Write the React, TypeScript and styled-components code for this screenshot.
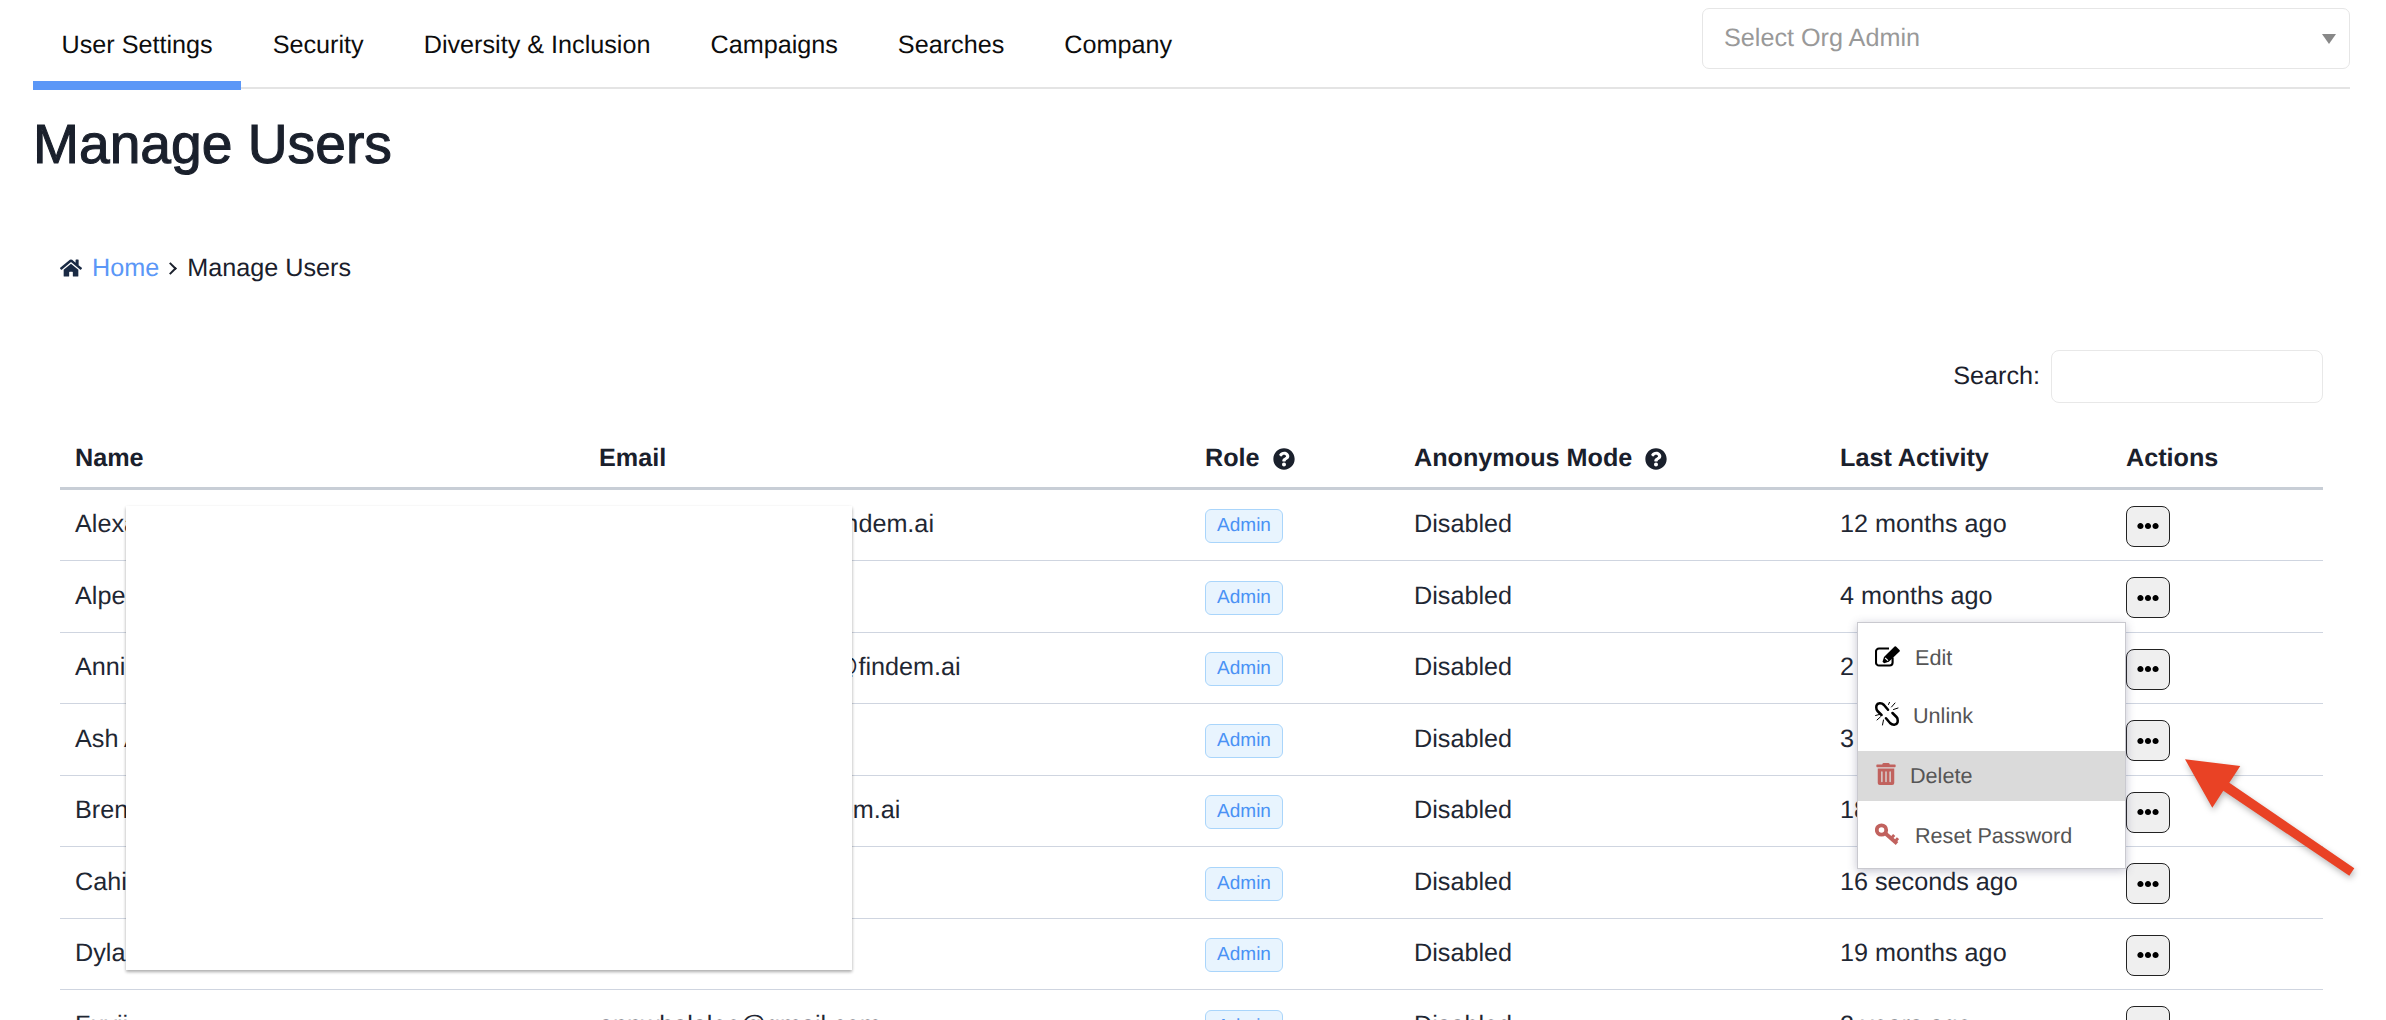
import React from "react";
import styled, { createGlobalStyle } from "styled-components";
import { FaHome, FaQuestionCircle, FaTrashAlt, FaEllipsisH } from "react-icons/fa";

const Global = createGlobalStyle`
  html, body { margin: 0; padding: 0; background: #fff; overflow: hidden; }
  * { box-sizing: border-box; }
  body {
    font-family: "Liberation Sans", Arial, sans-serif;
    font-size: 25.2px;
    color: #1a202c;
    text-rendering: geometricPrecision;
  }
`;

const Page = styled.div`
  position: relative;
  width: 2386px;
  height: 1020px;
  overflow: hidden;
  padding: 0 36px 0 33px;
`;

const Nav = styled.nav`
  display: flex;
  justify-content: space-between;
  align-items: flex-start;
  height: 89px;
  border-bottom: 2px solid #e4e4e4;
`;

const Tabs = styled.div`
  display: flex;
  gap: 3px;
`;

const Tab = styled.a<{ $active?: boolean }>`
  display: block;
  height: 90px;
  padding: 30px 28.5px 0 28.5px;
  line-height: 30px;
  color: #0d0d0d;
  border-bottom: 9px solid ${(p) => (p.$active ? "#5b97f7" : "transparent")};
`;

const OrgSelect = styled.div`
  width: 648px;
  height: 61px;
  margin-top: 8px;
  padding: 0 13px 0 21px;
  display: flex;
  align-items: center;
  justify-content: space-between;
  border: 1.5px solid #e6e6e6;
  border-radius: 7px;
  color: #999;
`;

const Caret = styled.span`
  width: 0;
  height: 0;
  border-left: 7px solid transparent;
  border-right: 7px solid transparent;
  border-top: 10px solid #888;
`;

const Title = styled.h1`
  margin: 22px 0 0;
  font-size: 55.2px;
  font-weight: 400;
  line-height: 66px;
  color: #1a202c;
  -webkit-text-stroke: 1.1px #1a202c;
`;

const Crumbs = styled.div`
  margin: 75.5px 0 0 27px;
  display: flex;
  align-items: center;
  line-height: 30px;
  color: #1a202c;
`;

const HomeLink = styled.a`
  margin: 0 8px 0 10px;
  color: #5b97f7;
`;

const Sep = styled.span`
  width: 9px;
  height: 9px;
  margin: 2px 12px 0 -1px;
  border-top: 2px solid #1a202c;
  border-right: 2px solid #1a202c;
  transform: rotate(45deg);
`;

const SearchBar = styled.div`
  margin-top: 67px;
  padding-right: 27px;
  display: flex;
  justify-content: flex-end;
  align-items: center;
  gap: 11px;
`;

const SearchBox = styled.div`
  width: 272px;
  height: 53px;
  border: 1.5px solid #e8e8e8;
  border-radius: 8px;
`;

const Table = styled.div`
  width: 2263px;
  margin: 25.5px 0 0 27px;
`;

const columns = "524px 606px 209px 426px 286px 212px";

const Head = styled.div`
  display: grid;
  grid-template-columns: ${columns};
  align-items: center;
  height: 61.75px;
  padding-top: 3px;
  border-bottom: 3px solid #c8ced6;
  font-weight: 700;
`;

const HeadCell = styled.div`
  display: flex;
  align-items: center;
  gap: 13px;
  padding-left: 15px;
  color: #1a202c;
  svg { flex: none; }
`;

const Row = styled.div`
  display: grid;
  grid-template-columns: ${columns};
  align-items: center;
  height: 71.5px;
  border-bottom: 1.5px solid #cfd5e0;
`;

const Cell = styled.div`
  padding: 0 0 1px 15px;
  white-space: nowrap;
  color: #1f2733;
`;

const Badge = styled.span`
  display: inline-flex;
  align-items: center;
  justify-content: center;
  width: 78px;
  height: 34px;
  margin-top: 3px;
  font-size: 19px;
  color: #4a92f5;
  background: #e8f4fe;
  border: 1.5px solid #a9d5fb;
  border-radius: 6px;
`;

const DotsButton = styled.button`
  display: flex;
  align-items: center;
  justify-content: center;
  width: 44px;
  height: 41px;
  margin-top: 3px;
  padding: 0;
  background: #efefef;
  border: 1.5px solid #222;
  border-radius: 8px;
  color: #000;
`;

const Mask = styled.div`
  position: absolute;
  left: 126px;
  top: 506px;
  width: 726px;
  height: 464px;
  background: #fff;
  box-shadow: 0 2px 3px rgba(0, 0, 0, 0.3), 0 1px 4px rgba(0, 0, 0, 0.05);
`;

const Menu = styled.div`
  position: absolute;
  left: 1857px;
  top: 622px;
  width: 269px;
  height: 247px;
  padding-top: 10px;
  display: flex;
  flex-direction: column;
  gap: 10px;
  background: #fff;
  border: 1px solid #c9c9cf;
  box-shadow: 0 2px 9px rgba(70, 70, 110, 0.32);
`;

const MenuRow = styled.div<{ $gap: number; $active?: boolean; $tint?: boolean }>`
  display: flex;
  flex: none;
  align-items: center;
  gap: ${(p) => p.$gap}px;
  height: 50px;
  padding-left: 17px;
  font-size: 21.6px;
  color: #555;
  background: ${(p) => (p.$active ? "#dadada" : "transparent")};
  &:first-child { margin-bottom: -2px; }
  svg { flex: none; margin-bottom: 4px; color: ${(p) => (p.$tint ? "#c1625e" : "#000")}; }
`;

const Arrow = styled.svg`
  position: absolute;
  left: 2180px;
  top: 755px;
  width: 180px;
  height: 125px;
  overflow: visible;
  filter: drop-shadow(1px 3px 3px rgba(0, 0, 0, 0.28));
`;

const EditIcon = () => (
  <svg width="25" height="21" viewBox="0 0 25 21" fill="none">
    <path
      d="M17.6 11.5V16.5A3 3 0 0 1 14.6 19.5H4A3 3 0 0 1 1 16.5V5.5A3 3 0 0 1 4 2.5H14"
      stroke="currentColor"
      strokeWidth="2.1"
    />
    <path d="M7.5 15.8 L9 11 L19.6 0.5 A1 1 0 0 1 21 0.5 L24.5 4 A1 1 0 0 1 24.5 5.4 L13.8 15.8 L9.2 17.2 Z" fill="currentColor" />
    <path d="M10.2 12 L13 14.6" stroke="#fff" strokeWidth="1.1" />
  </svg>
);

const UnlinkIcon = () => (
  <svg width="24" height="24" viewBox="0 0 24 24" fill="none" stroke="currentColor" strokeLinecap="round">
    <path d="M13 7.8 L9 3 C6.5 0.5 2.5 0.8 1.5 3.5 C1 6 1.5 8 2.5 9 L6.5 13" strokeWidth="2.5" />
    <path d="M11 16.2 L15 21 C17.5 23.5 21.5 23.2 22.5 20.5 C23 18 22.5 16 21.5 15 L17.5 11" strokeWidth="2.5" />
    <path
      d="M13.5 2.5 L14.5 0.3 M16.5 5 L20 1 M18.5 7.5 L23 6 M0.6 13.5 L4.5 12.4 M2 18 L5.5 14.8 M7.5 23 L8.5 18"
      strokeWidth="1"
    />
  </svg>
);

const KeyIcon = () => (
  <svg width="24" height="22" viewBox="0 0 24 22" fill="none" stroke="currentColor" strokeWidth="3.8">
    <circle cx="6.5" cy="7" r="4.7" />
    <path d="M10.2 10.3 L22 20.5" />
    <path d="M16.2 15.2 L19.2 12 M20 18.6 L23 15.2" strokeWidth="3" />
  </svg>
);

const tabs = ["User Settings", "Security", "Diversity & Inclusion", "Campaigns", "Searches", "Company"];

const users = [
  ["Alexandra M", "alexandra.morsino@findem.ai", "12 months ago"],
  ["Alper T", "alper@findem.ai", "4 months ago"],
  ["Annie R", "annie.rosenbergsnits@findem.ai", "2 months ago"],
  ["Ash A", "ash@findem.ai", "3 months ago"],
  ["Brenda J", "brenda.johnson@findem.ai", "18 months ago"],
  ["Cahit K", "cahit@findem.ai", "16 seconds ago"],
  ["Dylan P", "dylan@findem.ai", "19 months ago"],
  ["Fuyii", "annwhalalee@gmail.com", "2 years ago"],
];

export default function App() {
  return (
    <Page>
      <Global />
      <Nav>
        <Tabs>
          {tabs.map((t, i) => (
            <Tab key={t} $active={i === 0}>{t}</Tab>
          ))}
        </Tabs>
        <OrgSelect>
          Select Org Admin
          <Caret />
        </OrgSelect>
      </Nav>
      <Title>Manage Users</Title>
      <Crumbs>
        <FaHome size={22} color="#1a2a44" />
        <HomeLink>Home</HomeLink>
        <Sep />
        Manage Users
      </Crumbs>
      <SearchBar>
        Search:
        <SearchBox />
      </SearchBar>
      <Table>
        <Head>
          <HeadCell>Name</HeadCell>
          <HeadCell>Email</HeadCell>
          <HeadCell>Role <FaQuestionCircle size={22} /></HeadCell>
          <HeadCell>Anonymous Mode <FaQuestionCircle size={22} /></HeadCell>
          <HeadCell>Last Activity</HeadCell>
          <HeadCell>Actions</HeadCell>
        </Head>
        {users.map(([name, email, last]) => (
          <Row key={name}>
            <Cell>{name}</Cell>
            <Cell>{email}</Cell>
            <Cell><Badge>Admin</Badge></Cell>
            <Cell>Disabled</Cell>
            <Cell>{last}</Cell>
            <Cell>
              <DotsButton aria-label="Actions"><FaEllipsisH size={22} /></DotsButton>
            </Cell>
          </Row>
        ))}
      </Table>
      <Mask />
      <Menu>
        <MenuRow $gap={15}><EditIcon />Edit</MenuRow>
        <MenuRow $gap={14}><UnlinkIcon />Unlink</MenuRow>
        <MenuRow $gap={13} $active $tint><FaTrashAlt size={22} />Delete</MenuRow>
        <MenuRow $gap={16} $tint><KeyIcon />Reset Password</MenuRow>
      </Menu>
      <Arrow viewBox="0 0 180 125">
        <polygon
          points="5,4.3 60.3,11 49.3,27.7 174.3,113.3 169.3,120.7 43.3,35.7 32.3,52.7"
          fill="#e94225"
        />
      </Arrow>
    </Page>
  );
}
